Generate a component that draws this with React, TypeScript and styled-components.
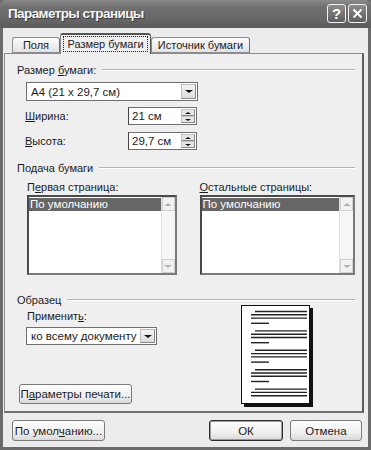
import React from 'react';
import styled, { createGlobalStyle } from 'styled-components';

const GlobalStyle = createGlobalStyle`
  html, body {
    margin: 0;
    padding: 0;
    background: #6b6b6b;
  }
  body {
    font-family: "Liberation Sans", Arial, sans-serif;
    font-size: 11px;
    color: #1c1c1c;
  }
`;

const Window = styled.div`
  width: 371px;
  height: 450px;
  display: flex;
  flex-direction: column;
`;

const TitleBar = styled.header`
  height: 28px;
  flex: none;
  box-sizing: border-box;
  display: flex;
  align-items: center;
  justify-content: space-between;
  padding: 0 4px 1px 8px;
  background: linear-gradient(#8a8a8a 0%, #707070 25%, #666 70%, #5c5c5c 100%);
  border-radius: 6px 6px 0 0;
`;

const Title = styled.h1`
  margin: 0;
  font-size: 13.5px;
  font-weight: bold;
  color: #f6f6f6;
  text-shadow: 1px 1px 0 #3a3a3a;
  letter-spacing: -0.6px;
`;

const TitleButtons = styled.div`
  display: flex;
  gap: 2px;
`;

const TitleButton = styled.div`
  width: 19px;
  height: 19px;
  box-sizing: border-box;
  border: 1px solid #f2f2f2;
  border-radius: 3px;
  background: linear-gradient(#8c8c8c, #5e5e5e);
  display: flex;
  align-items: center;
  justify-content: center;
  color: #fff;
  font-size: 15px;
  font-weight: bold;
`;

const Body = styled.div`
  flex: 1;
  display: flex;
  flex-direction: column;
  background: #ececec;
  border: 3px solid #6a6a6a;
  border-top: none;
  padding-top: 5px;
`;

const TabRow = styled.div`
  height: 20px;
  display: flex;
  align-items: flex-end;
  padding-left: 9px;
`;

const Tab = styled.div<{ $active?: boolean; $width: number }>`
  width: ${p => p.$width}px;
  height: ${p => (p.$active ? 21 : 16)}px;
  margin-bottom: ${p => (p.$active ? -1 : 0)}px;
  box-sizing: border-box;
  display: flex;
  align-items: center;
  justify-content: center;
  border: 1px solid #8c8c8c;
  border-bottom: ${p => (p.$active ? 'none' : '1px solid #8c8c8c')};
  border-top: ${p => (p.$active ? '2px solid #555' : '1px solid #8c8c8c')};
  border-right-color: ${p => (p.$active ? '#555' : '#6e6e6e')};
  border-radius: 3px 3px 0 0;
  background: ${p => (p.$active ? '#efefef' : 'linear-gradient(#fdfdfd, #e2e2e2)')};
  position: relative;
  z-index: ${p => (p.$active ? 1 : 0)};
  padding-bottom: ${p => (p.$active ? 2 : 0)}px;
`;

const Focus = styled.span`
  outline: 1px dotted #222;
  outline-offset: 1px;
  padding: 0 2px;
`;

const Panel = styled.section`
  height: 360px;
  margin: 0 4px 0 1px;
  box-sizing: border-box;
  border: 1px solid #8c8c8c;
  border-right: 2px solid #5c5c5c;
  border-bottom: 2px solid #6e6e6e;
  background: #efefef;
  padding: 9px 7px 0 12px;
  display: flex;
  flex-direction: column;
`;

const GroupHeader = styled.div<{ $top?: number }>`
  height: 14px;
  margin-top: ${p => p.$top ?? 0}px;
  display: flex;
  align-items: center;
  gap: 6px;
  &::after {
    content: '';
    flex: 1;
    height: 0;
    border-top: 1px solid #b2b2b2;
    border-bottom: 1px solid #fff;
  }
`;

const Select = styled.div<{ $width: number; $height: number; $top: number; $left: number }>`
  width: ${p => p.$width}px;
  height: ${p => p.$height}px;
  margin: ${p => p.$top}px 0 0 ${p => p.$left}px;
  box-sizing: border-box;
  border: 1px solid #6f6f6f;
  background: #fff;
  display: flex;
  align-items: center;
  padding: 1px;
`;

const SelectText = styled.span`
  flex: 1;
  padding-left: 3px;
  font-size: 11.5px;
`;

const ArrowButton = styled.div`
  width: 15px;
  align-self: stretch;
  box-sizing: border-box;
  border: 1px solid #bdbdbd;
  border-right-color: #8a8a8a;
  border-bottom-color: #8a8a8a;
  background: linear-gradient(#f4f4f4, #dcdcdc);
  display: flex;
  align-items: center;
  justify-content: center;
`;

const Triangle = styled.span<{ $up?: boolean; $color?: string; $size?: number }>`
  width: 0;
  height: 0;
  border-left: ${p => p.$size ?? 4}px solid transparent;
  border-right: ${p => p.$size ?? 4}px solid transparent;
  ${p =>
    p.$up
      ? `border-bottom: ${(p.$size ?? 4) - 1}px solid ${p.$color ?? '#111'};`
      : `border-top: ${(p.$size ?? 4) - 1}px solid ${p.$color ?? '#111'};`}
`;

const FieldRow = styled.div<{ $top: number }>`
  display: flex;
  align-items: center;
  margin: ${p => p.$top}px 0 0 8px;
`;

const FieldLabel = styled.label`
  width: 103px;
`;

const SpinBox = styled.div`
  width: 69px;
  height: 18px;
  box-sizing: border-box;
  border: 1px solid #6f6f6f;
  border-left-color: #444;
  background: #fff;
  display: flex;
  padding: 1px;
`;

const SpinText = styled.span`
  flex: 1;
  padding-left: 2px;
  font-size: 11.5px;
  line-height: 14px;
`;

const SpinButtons = styled.div`
  width: 14px;
  display: flex;
  flex-direction: column;
`;

const SpinButton = styled.div`
  flex: 1;
  box-sizing: border-box;
  border: 1px solid #c4c4c4;
  border-right-color: #888;
  border-bottom-color: #888;
  background: #e6e6e6;
  display: flex;
  align-items: center;
  justify-content: center;
`;

const Columns = styled.div<{ $top: number }>`
  display: flex;
  gap: 23px;
  margin: ${p => p.$top}px 0 0 10px;
`;

const Column = styled.div<{ $width: number }>`
  width: ${p => p.$width}px;
  display: flex;
  flex-direction: column;
  gap: 2px;
`;

const ListBox = styled.div`
  height: 80px;
  box-sizing: border-box;
  border: 2px solid #4a4a4a;
  border-right-color: #7a7a7a;
  border-bottom-color: #7a7a7a;
  background: #fff;
  display: flex;
`;

const ListItems = styled.div`
  flex: 1;
  padding-top: 1px;
`;

const ListItem = styled.div<{ $selected?: boolean }>`
  height: 13px;
  line-height: 13px;
  padding-left: 1px;
  font-size: 11.5px;
  background: ${p => (p.$selected ? '#666' : 'transparent')};
  color: ${p => (p.$selected ? '#fff' : '#1c1c1c')};
`;

const ScrollBar = styled.div`
  width: 13px;
  display: flex;
  flex-direction: column;
  justify-content: space-between;
  background: #f6f6f6;
  border-left: 1px solid #e0e0e0;
`;

const ScrollArrow = styled.div`
  height: 14px;
  box-sizing: border-box;
  border: 1px solid #d0d0d0;
  background: #f2f2f2;
  display: flex;
  align-items: center;
  justify-content: center;
`;

const SampleRow = styled.div`
  height: 99px;
  display: flex;
`;

const SampleLeft = styled.div`
  width: 224px;
  display: flex;
  flex-direction: column;
`;

const ApplyLabel = styled.label`
  margin: 2px 0 0 10px;
  height: 14px;
  line-height: 14px;
`;

const Button = styled.button<{ $width: number; $default?: boolean }>`
  width: ${p => p.$width}px;
  height: 21px;
  box-sizing: border-box;
  padding: 0;
  font: inherit;
  font-size: 11.5px;
  color: #1c1c1c;
  border: 1px solid ${p => (p.$default ? '#2e2e2e' : '#7a7a7a')};
  border-radius: 3px;
  background: linear-gradient(#fefefe, #f0f0f0 60%, #d9d9d9);
  box-shadow: ${p => (p.$default ? 'inset 0 0 0 1px #9a9a9a' : 'none')};
`;

const PrintButton = styled(Button)`
  height: 20px;
  margin: auto 0 2px 2px;
`;

const PagePreview = styled.svg`
  margin-top: -2px;
  flex: none;
`;

const Footer = styled.footer`
  display: flex;
  gap: 7px;
  padding: 7px 6px 0 9px;
`;

const Spacer = styled.div`
  flex: 1;
`;

const Page: React.FC = () => {
  const groups = [0, 1, 2, 3, 4];
  return (
    <PagePreview width={73} height={102} viewBox="0 0 73 102">
      <rect x={3} y={3} width={69} height={99} fill="#111" />
      <rect x={0.5} y={0.5} width={68} height={98} fill="#fff" stroke="#111" />
      {groups.map(g => {
        const y = 6.5 + g * 19.4;
        return (
          <g key={g} stroke="#222" strokeWidth={1.4}>
            <line x1={14} x2={66} y1={y} y2={y} />
            <line x1={10} x2={66} y1={y + 3.3} y2={y + 3.3} />
            <line x1={10} x2={66} y1={y + 6.6} y2={y + 6.6} />
            {g < 4 && <line x1={10} x2={28} y1={y + 11.8} y2={y + 11.8} />}
          </g>
        );
      })}
    </PagePreview>
  );
};

const Spin: React.FC<{ value: string }> = ({ value }) => (
  <SpinBox>
    <SpinText>{value}</SpinText>
    <SpinButtons>
      <SpinButton>
        <Triangle $up $size={3} />
      </SpinButton>
      <SpinButton>
        <Triangle $size={3} />
      </SpinButton>
    </SpinButtons>
  </SpinBox>
);

const List: React.FC = () => (
  <ListBox>
    <ListItems>
      <ListItem $selected>По умолчанию</ListItem>
    </ListItems>
    <ScrollBar>
      <ScrollArrow>
        <Triangle $up $size={4} $color="#b4b4b4" />
      </ScrollArrow>
      <ScrollArrow>
        <Triangle $size={4} $color="#b4b4b4" />
      </ScrollArrow>
    </ScrollBar>
  </ListBox>
);

const App: React.FC = () => (
  <>
    <GlobalStyle />
    <Window>
      <TitleBar>
        <Title>Параметры страницы</Title>
        <TitleButtons>
          <TitleButton>?</TitleButton>
          <TitleButton>
            <svg width="11" height="11" viewBox="0 0 11 11">
              <path d="M1.5 1.5 L9.5 9.5 M9.5 1.5 L1.5 9.5" stroke="#fff" strokeWidth="2" />
            </svg>
          </TitleButton>
        </TitleButtons>
      </TitleBar>
      <Body>
        <TabRow>
          <Tab $width={48}>Поля</Tab>
          <Tab $width={91} $active>
            <Focus>Размер бумаги</Focus>
          </Tab>
          <Tab $width={99}>Источник бумаги</Tab>
        </TabRow>
        <Panel>
          <GroupHeader>
            <span>
              Размер <u>б</u>умаги:
            </span>
          </GroupHeader>
          <Select $width={172} $height={19} $top={5} $left={9}>
            <SelectText>A4 (21 x 29,7 см)</SelectText>
            <ArrowButton>
              <Triangle />
            </ArrowButton>
          </Select>
          <FieldRow $top={6}>
            <FieldLabel>
              <u>Ш</u>ирина:
            </FieldLabel>
            <Spin value="21 см" />
          </FieldRow>
          <FieldRow $top={7}>
            <FieldLabel>
              <u>В</u>ысота:
            </FieldLabel>
            <Spin value="29,7 см" />
          </FieldRow>

          <GroupHeader $top={11}>
            <span>Подача бумаги</span>
          </GroupHeader>
          <Columns $top={6}>
            <Column $width={150}>
              <label>
                П<u>е</u>рвая страница:
              </label>
              <List />
            </Column>
            <Column $width={156}>
              <label>
                <u>О</u>стальные страницы:
              </label>
              <List />
            </Column>
          </Columns>

          <GroupHeader $top={18}>
            <span>Образец</span>
          </GroupHeader>
          <SampleRow>
            <SampleLeft>
              <ApplyLabel>
                Применит<u>ь</u>:
              </ApplyLabel>
              <Select $width={131} $height={18} $top={4} $left={9}>
                <SelectText>ко всему документу</SelectText>
                <ArrowButton>
                  <Triangle />
                </ArrowButton>
              </Select>
              <PrintButton $width={113}>
                П<u>а</u>раметры печати...
              </PrintButton>
            </SampleLeft>
            <Page />
          </SampleRow>
        </Panel>
        <Footer>
          <Button $width={93}>
            По умол<u>ч</u>анию...
          </Button>
          <Spacer />
          <Button $width={74} $default>
            ОК
          </Button>
          <Button $width={72}>Отмена</Button>
        </Footer>
      </Body>
    </Window>
  </>
);

export default App;
